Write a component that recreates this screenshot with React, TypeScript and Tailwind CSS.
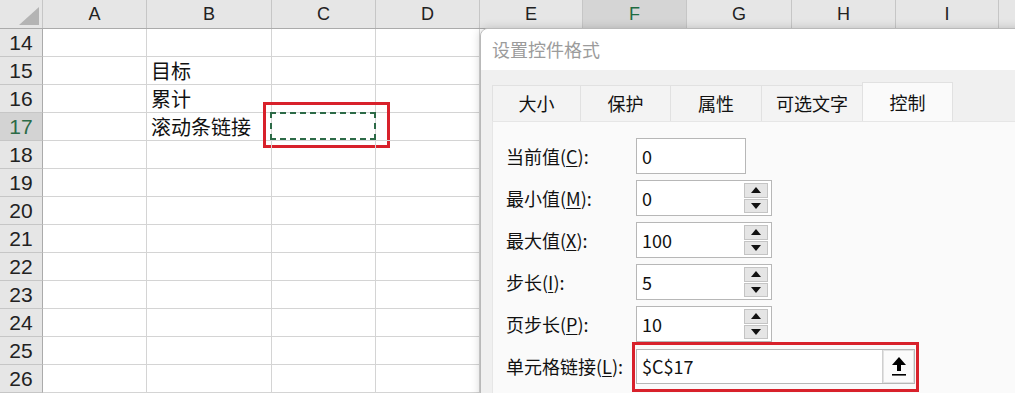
import React from 'react';

const colW = [104, 125, 104, 104, 103, 104, 105, 104, 103];
const colNames = ['A', 'B', 'C', 'D', 'E', 'F', 'G', 'H', 'I'];
const rows = [14, 15, 16, 17, 18, 19, 20, 21, 22, 23, 24, 25, 26];
const cellText: Record<string, string> = { '15': '目标', '16': '累计', '17': '滚动条链接' };

const cjk = { fontFamily: '"Noto Sans CJK SC", "Noto Sans", sans-serif' };

function Spinner() {
  return (
    <div className="absolute right-[3px] top-[2px] bottom-[2px] w-[24px] flex flex-col gap-[1px]">
      <div className="flex-1 bg-[#e5e5e5] border border-[#c4c4c4] flex items-center justify-center">
        <svg width="10" height="6" viewBox="0 0 10 6"><path d="M0 6 L5 0 L10 6 Z" fill="#111" /></svg>
      </div>
      <div className="flex-1 bg-[#e5e5e5] border border-[#c4c4c4] flex items-center justify-center">
        <svg width="10" height="6" viewBox="0 0 10 6"><path d="M0 0 L10 0 L5 6 Z" fill="#111" /></svg>
      </div>
    </div>
  );
}

function FieldRow({ label, u, rest, value, spin, wide }: { label: string; u: string; rest: string; value: string; spin?: boolean; wide?: boolean }) {
  return (
    <div className="flex items-center h-[36px]">
      <div className="w-[130px] text-[18px] text-[#111]" style={cjk}>
        {label}(<span className="underline underline-offset-2">{u}</span>){rest}
      </div>
      <div className={`relative h-[36px] bg-white border border-[#b7b7b7] flex items-center pl-[5px] ${wide ? 'w-[136px]' : 'w-[110px]'}`}>
        <span className="text-[18px] text-[#111]" style={cjk}>{value}</span>
        {spin && <Spinner />}
      </div>
    </div>
  );
}

function Dialog() {
  const tabs = [
    { t: '大小', w: 88 },
    { t: '保护', w: 90 },
    { t: '属性', w: 91 },
    { t: '可选文字', w: 101 },
  ];
  return (
    <div className="absolute left-[480px] top-[28px] right-[-20px] bottom-[-20px] flex flex-col bg-[#f0f0f0] border border-[#b9b9b9] rounded-tl-[8px] shadow-[0_0_10px_rgba(0,0,0,0.18)] overflow-hidden">
      <div className="h-[41px] bg-white flex items-center pl-[11px] text-[18px] text-[#9b9b9b]" style={cjk}>设置控件格式</div>
      <div className="flex-1 flex flex-col pl-[11px] pt-[12px]">
        <div className="flex items-end h-[39px]">
          {tabs.map((x) => (
            <div key={x.t} style={{ width: x.w, ...cjk }} className="h-[36px] bg-[#f3f3f3] border-t border-l border-[#e1e1e1] flex items-center justify-center text-[18px] text-[#111]">
              {x.t}
            </div>
          ))}
          <div style={cjk} className="w-[91px] h-[39px] bg-[#fafafa] border-t border-l border-r border-[#e1e1e1] flex items-center justify-center text-[18px] text-[#111]">
            控制
          </div>
        </div>
        <div className="flex-1 bg-[#fafafa] border-t border-l border-[#e6e6e6] pl-[13px] pt-[16px] flex flex-col gap-[6px]">
          <FieldRow label="当前值" u="C" rest=":" value="0" />
          <FieldRow label="最小值" u="M" rest=":" value="0" spin wide />
          <FieldRow label="最大值" u="X" rest=":" value="100" spin wide />
          <FieldRow label="步长" u="I" rest=":" value="5" spin wide />
          <FieldRow label="页步长" u="P" rest=":" value="10" spin wide />
          <div className="flex items-center h-[36px]">
            <div className="w-[130px] text-[18px] text-[#111] whitespace-nowrap" style={cjk}>
              单元格链接(<span className="underline underline-offset-2">L</span>):
            </div>
            <div className="relative w-[279px] h-[35px] bg-white border border-[#b7b7b7] flex items-center pl-[5px]">
              <span className="text-[18px] text-[#111]" style={cjk}>$C$17</span>
              <div className="absolute right-[0px] top-[0px] bottom-[0px] w-[32px] bg-[#fbfbfb] border-l border-[#cfcfcf] shadow-[inset_0_0_0_1px_#e2e2e2] flex items-center justify-center">
                <svg width="16" height="20" viewBox="0 0 16 20">
                  <path d="M8 1 L15 9 L10 9 L10 15 L6 15 L6 9 L1 9 Z" fill="#000" />
                  <rect x="1" y="18" width="14" height="1.6" fill="#000" />
                </svg>
              </div>
              <div className="absolute left-[-5px] top-[-8px] right-[-5px] bottom-[-9px] border-[3px] border-[#d8212b]" />
            </div>
          </div>
        </div>
      </div>
    </div>
  );
}

export default function App() {
  return (
    <div className="relative w-[1015px] h-[393px] overflow-hidden bg-white" style={{ fontFamily: '"Liberation Sans", Arial, sans-serif' }}>
      {/* column headers */}
      <div className="flex h-[29px] bg-[#e6e6e6] border-b border-[#ababab]">
        <div className="w-[43px] shrink-0 border-r border-[#c6c6c6] relative">
          <svg className="absolute right-[3px] bottom-[3px]" width="20" height="18" viewBox="0 0 20 18"><path d="M20 0 L20 18 L0 18 Z" fill="#b4b4b4" /></svg>
        </div>
        {colNames.map((c, i) => (
          <div
            key={c}
            style={{ width: colW[i] }}
            className={`shrink-0 border-r border-[#c6c6c6] flex items-center justify-center text-[18px] ${c === 'F' ? 'bg-[#d5d5d5] text-[#1e6b41]' : 'text-[#222]'}`}
          >
            {c}
          </div>
        ))}
        <div className="flex-1" />
      </div>
      {/* rows */}
      {rows.map((r) => (
        <div key={r} className="flex h-[28px]">
          <div className={`w-[43px] shrink-0 border-r border-b border-r-[#ababab] border-b-[#c6c6c6] flex items-center justify-center text-[21px] ${r === 17 ? 'bg-[#d3d3d3] text-[#2c6b47]' : 'bg-[#e6e6e6] text-[#222]'}`}>
            {r}
          </div>
          {colW.map((w, i) => (
            <div key={i} style={{ width: w }} className="relative shrink-0 border-r border-b border-[#d4d4d4] flex items-center">
              {i === 1 && cellText[String(r)] && (
                <span className="pl-[4px] text-[20px] text-[#111] whitespace-nowrap" style={cjk}>{cellText[String(r)]}</span>
              )}
              {i === 2 && r === 17 && (
                <>
                  <div className="absolute left-[-2px] top-[-1px] right-[-1px] bottom-[0px] border-2 border-dashed border-[#2d6a47]" />
                  <div className="absolute left-[-9px] top-[-11px] right-[-15px] bottom-[-8px] border-[3px] border-[#d8212b]" />
                </>
              )}
            </div>
          ))}
          <div className="flex-1 border-b border-[#d4d4d4]" />
        </div>
      ))}
      <Dialog />
    </div>
  );
}
